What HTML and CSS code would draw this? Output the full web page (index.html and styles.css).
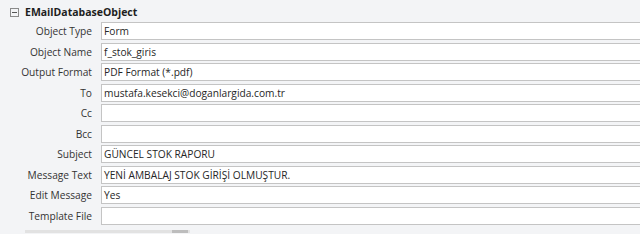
FILE: index.html
```html
<!DOCTYPE html>
<html lang="tr">
<head>
    <meta charset="UTF-8">
    <title>EMailDatabaseObject</title>
    <link rel="stylesheet" href="styles.css">
</head>
<body>
    <div class="group-head">
        <span class="toggle"></span>
        <span class="group-title">EMailDatabaseObject</span>
    </div>

    <div class="props">
        <label>Object Type</label>
        <div class="val">Form</div>
        <label>Object Name</label>
        <div class="val">f_stok_giris</div>
        <label>Output Format</label>
        <div class="val">PDF Format (*.pdf)</div>
        <label>To</label>
        <div class="val">mustafa.kesekci@doganlargida.com.tr</div>
        <label>Cc</label>
        <div class="val"></div>
        <label>Bcc</label>
        <div class="val"></div>
        <label>Subject</label>
        <div class="val">GÜNCEL STOK RAPORU</div>
        <label>Message Text</label>
        <div class="val">YENİ AMBALAJ STOK GİRİŞİ OLMUŞTUR.</div>
        <label>Edit Message</label>
        <div class="val">Yes</div>
        <label>Template File</label>
        <div class="val"></div>
    </div>

    <div class="hscroll"><div class="thumb"></div></div>
</body>
</html>
```

FILE: styles.css
```css
body {
    margin: 0;
    font-family: "Open Sans", "Noto Sans", sans-serif;
    font-size: 10.2px;
    color: #262626;
    background: #f3f4f6;
    overflow: hidden;
    width: 640px;
    height: 234px;
}
.group-head {
    display: flex;
    align-items: center;
    height: 20px;
    padding: 2px 0 0 10px;
}
.toggle {
    width: 7px;
    height: 7px;
    border: 1px solid #8a8a8a;
    position: relative;
    margin-right: 6px;
    margin-top: 1px;
}
.toggle::after {
    content: "";
    position: absolute;
    left: 1px;
    right: 1px;
    top: 3px;
    height: 1px;
    background: #555;
}
.group-title {
    font-weight: bold;
    font-size: 10.5px;
    color: #1e1e1e;
}
.props {
    display: grid;
    grid-template-columns: 92px 560px;
    column-gap: 9px;
    row-gap: 2.5px;
}
.props label {
    text-align: right;
    line-height: 18px;
    color: #333;
}
.val {
    height: 16px;
    line-height: 16px;
    border: 1px solid #c4c4c4;
    border-right: none;
    background: #fff;
    padding-left: 2px;
    white-space: nowrap;
}
.hscroll {
    margin: 5px 0 0 25px;
    width: 165px;
    height: 3px;
    background: #e2e2e2;
    position: relative;
}
.hscroll .thumb {
    position: absolute;
    right: 2px;
    top: 0;
    width: 16px;
    height: 3px;
    background: #bdbdbd;
}
```
